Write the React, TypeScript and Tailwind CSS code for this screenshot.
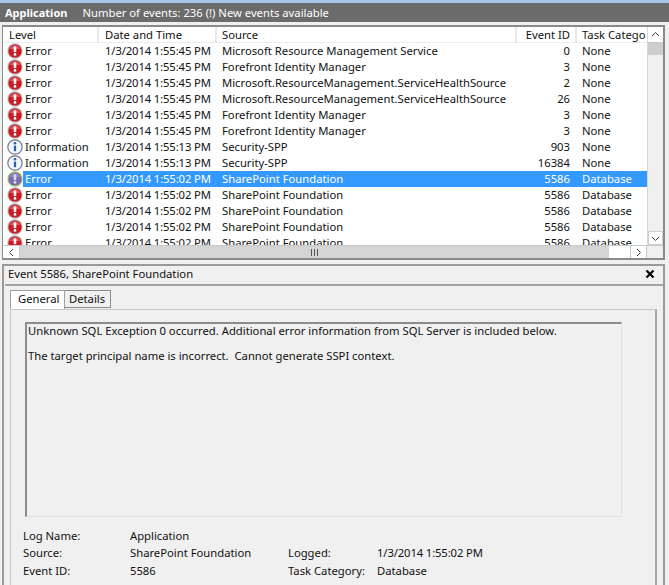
import React from "react";

type Row = { level: "Error" | "Information"; date: string; source: string; id: string; task: string; selected?: boolean };

const rows: Row[] = [
  { level: "Error", date: "1/3/2014 1:55:45 PM", source: "Microsoft Resource Management Service", id: "0", task: "None" },
  { level: "Error", date: "1/3/2014 1:55:45 PM", source: "Forefront Identity Manager", id: "3", task: "None" },
  { level: "Error", date: "1/3/2014 1:55:45 PM", source: "Microsoft.ResourceManagement.ServiceHealthSource", id: "2", task: "None" },
  { level: "Error", date: "1/3/2014 1:55:45 PM", source: "Microsoft.ResourceManagement.ServiceHealthSource", id: "26", task: "None" },
  { level: "Error", date: "1/3/2014 1:55:45 PM", source: "Forefront Identity Manager", id: "3", task: "None" },
  { level: "Error", date: "1/3/2014 1:55:45 PM", source: "Forefront Identity Manager", id: "3", task: "None" },
  { level: "Information", date: "1/3/2014 1:55:13 PM", source: "Security-SPP", id: "903", task: "None" },
  { level: "Information", date: "1/3/2014 1:55:13 PM", source: "Security-SPP", id: "16384", task: "None" },
  { level: "Error", date: "1/3/2014 1:55:02 PM", source: "SharePoint Foundation", id: "5586", task: "Database", selected: true },
  { level: "Error", date: "1/3/2014 1:55:02 PM", source: "SharePoint Foundation", id: "5586", task: "Database" },
  { level: "Error", date: "1/3/2014 1:55:02 PM", source: "SharePoint Foundation", id: "5586", task: "Database" },
  { level: "Error", date: "1/3/2014 1:55:02 PM", source: "SharePoint Foundation", id: "5586", task: "Database" },
  { level: "Error", date: "1/3/2014 1:55:02 PM", source: "SharePoint Foundation", id: "5586", task: "Database" },
];

function ErrorIcon({ selected }: { selected?: boolean }) {
  return (
    <svg width="16" height="16" viewBox="0 0 16 16" className="shrink-0">
      <circle cx="8" cy="8" r="7.7" fill={selected ? "#a9c96a" : "#b9b9b9"} />
      <circle cx="8" cy="8" r="6.6" fill={selected ? "#7d6db0" : "#cf1a22"} />
      <path d="M2.5 6 A6 6 0 0 1 13.5 6 Z" fill={selected ? "#9488c4" : "#e4565c"} />
      <rect x="6.7" y="3.2" width="2.6" height="6" rx="0.9" fill={selected ? "#d8d8ee" : "#ffffff"} />
      <circle cx="8" cy="11.4" r="1.4" fill={selected ? "#d8d8ee" : "#ffffff"} />
    </svg>
  );
}

function InfoIcon() {
  return (
    <svg width="16" height="16" viewBox="0 0 16 16" className="shrink-0">
      <circle cx="8" cy="8" r="7.2" fill="#f2f5fb" stroke="#6f7684" strokeWidth="1.2" />
      <rect x="6.9" y="6.6" width="2.2" height="5.6" fill="#2a5db0" />
      <circle cx="8" cy="4.3" r="1.3" fill="#2a5db0" />
    </svg>
  );
}

function HeaderCell({ label, className }: { label: string; className: string }) {
  return <div className={`h-full shrink-0 border-r-2 border-[#e8e8e8] overflow-hidden whitespace-nowrap ${className}`}>{label}</div>;
}

function Chevron({ d }: { d: string }) {
  return (
    <svg width="9" height="9" viewBox="0 0 9 9">
      <path d={d} fill="none" stroke="#404040" strokeWidth="1" />
    </svg>
  );
}

function EventRow({ row }: { row: Row }) {
  return (
    <div className="flex h-4 items-center shrink-0 whitespace-nowrap">
      <div className="w-[20px] pl-[4px] flex shrink-0">
        {row.level === "Error" ? <ErrorIcon selected={row.selected} /> : <InfoIcon />}
      </div>
      <div className={`flex h-full items-center flex-1 ${row.selected ? "bg-[#3399ff] text-[#ffffff]" : ""}`}>
        <div className="w-[82px] pl-[2px] shrink-0">{row.level}</div>
        <div className="w-[117px] shrink-0 tracking-[-0.12px]">{row.date}</div>
        <div className="w-[294px] shrink-0 overflow-hidden">{row.source}</div>
        <div className="w-[54px] shrink-0 text-right">{row.id}</div>
        <div className="pl-[12px]">{row.task}</div>
      </div>
    </div>
  );
}

export default function App() {
  return (
    <div
      className="w-[669px] h-[585px] overflow-hidden bg-[#f0f0f0] text-[11.25px] leading-4 text-[#111111] flex flex-col"
      style={{ fontFamily: '"Noto Sans", "Open Sans", sans-serif' }}
    >
      <div className="h-[3px] bg-[#a9c7e6] shrink-0" />
      <div className="h-[19px] bg-[#6b6b6b] text-[#ffffff] flex items-center pl-[5px] gap-[15px] shrink-0">
        <span className="font-bold text-[11px]">Application</span>
        <span>Number of events: 236 (!) New events available</span>
      </div>

      <div className="mt-[3px] ml-[2px] mr-[4px] h-[235px] shrink-0 border-t-2 border-l border-r-2 border-b-2 border-[#8a8a8a] bg-[#ffffff] flex flex-col">
        <div className="flex flex-1 min-h-0">
          <div className="flex-1 min-w-0 flex flex-col overflow-hidden">
            <div className="flex h-4 shrink-0 border-b border-[#ececec] items-center">
              <HeaderCell label="Level" className="w-[96px] pl-[6px]" />
              <HeaderCell label="Date and Time" className="w-[118px] pl-[6px]" />
              <HeaderCell label="Source" className="w-[300px] pl-[5px]" />
              <HeaderCell label="Event ID" className="w-[60px] text-right pr-[5px]" />
              <div className="pl-[5px] whitespace-nowrap overflow-hidden">Task Catego</div>
            </div>
            <div className="flex-1 flex flex-col overflow-hidden">
              {rows.map((r, i) => (
                <EventRow key={i} row={r} />
              ))}
            </div>
          </div>
          <div className="w-[16px] shrink-0 bg-[#f0f0f0] border-l border-[#d8d8d8] flex flex-col">
            <div className="h-[16px] flex items-center justify-center bg-[#ffffff] border-b border-[#c8c8c8]">
              <Chevron d="M1 6 L4.5 2.5 L8 6" />
            </div>
            <div className="h-[12px] bg-[#cdcdcd]" />
            <div className="flex-1" />
            <div className="h-[14px] flex items-center justify-center bg-[#ffffff] border border-[#d0d0d0]">
              <Chevron d="M1 3 L4.5 6.5 L8 3" />
            </div>
          </div>
        </div>
        <div className="h-[13px] shrink-0 bg-[#f0f0f0] border-t border-[#c8c8c8] flex">
          <div className="w-[17px] shrink-0 flex items-center justify-center bg-[#ffffff] border-r border-[#c8c8c8]">
            <Chevron d="M6 1 L2.5 4.5 L6 8" />
          </div>
          <div className="w-[589px] shrink-0 bg-[#d4d4d4] flex items-center justify-center">
            <div className="w-[7px] h-[7px] border-x border-[#555555] flex justify-center">
              <div className="w-px h-full bg-[#555555]" />
            </div>
          </div>
          <div className="w-[21px] shrink-0 bg-[#ffffff]" />
          <div className="w-[17px] shrink-0 flex items-center justify-center bg-[#ffffff] border-x border-[#c8c8c8]">
            <Chevron d="M3 1 L6.5 4.5 L3 8" />
          </div>
        </div>
      </div>

      <div className="mt-[4px] ml-[2px] mr-[4px] flex-1 min-h-0 border-t-2 border-l-2 border-r-2 border-[#9a9a9a] flex flex-col">
        <div className="h-[20px] shrink-0 ml-[1px] flex items-center justify-between pl-[3px] pr-[8px] pb-[2px] border-b-2 border-[#a4a4a4]">
          <span>Event 5586, SharePoint Foundation</span>
          <svg width="10" height="10" viewBox="0 0 10 10">
            <path d="M1.5 1.5 L8.5 8.5 M8.5 1.5 L1.5 8.5" stroke="#000000" strokeWidth="2.2" />
          </svg>
        </div>

        <div className="flex-1 min-h-0 pl-[6px] pr-[6px] pt-[4px] flex flex-col">
          <div className="flex items-end h-[19px] shrink-0">
            <div className="w-[55px] h-[19px] pl-[7px] bg-[#ffffff] border border-b-0 border-[#a0a0a0] flex items-center pb-[2px]">General</div>
            <div className="w-[46px] h-[18px] pl-[4px] mb-[1px] bg-[#f0f0f0] border border-l-0 border-[#8c8c8c] flex items-center">Details</div>
          </div>
          <div className="flex-1 min-h-0 border-t border-l border-r-2 border-[#c8c8c8] border-r-[#a8a8a8] pl-[12px] flex flex-col">
            <div className="mt-[12px] ml-[2px] h-[195px] w-[597px] shrink-0 border-t-2 border-l-2 border-[#8c8c8c] border-r border-b border-r-[#e2e2e2] border-b-[#e2e2e2] pl-px">
              <p className="leading-[14px]">Unknown SQL Exception 0 occurred. Additional error information from SQL Server is included below.</p>
              <p className="mt-[11px] leading-[14px] whitespace-pre">The target principal name is incorrect.  Cannot generate SSPI context.</p>
            </div>
            <div className="mt-[11px] flex flex-col gap-[1px]">
              <div className="flex h-4">
                <div className="w-[107px] shrink-0">Log Name:</div>
                <div>Application</div>
              </div>
              <div className="flex h-4">
                <div className="w-[107px] shrink-0">Source:</div>
                <div className="w-[158px] shrink-0">SharePoint Foundation</div>
                <div className="w-[89px] shrink-0">Logged:</div>
                <div className="tracking-[-0.12px]">1/3/2014 1:55:02 PM</div>
              </div>
              <div className="flex h-4 mt-[1px]">
                <div className="w-[107px] shrink-0">Event ID:</div>
                <div className="w-[158px] shrink-0">5586</div>
                <div className="w-[89px] shrink-0">Task Category:</div>
                <div>Database</div>
              </div>
            </div>
          </div>
        </div>
      </div>
    </div>
  );
}
